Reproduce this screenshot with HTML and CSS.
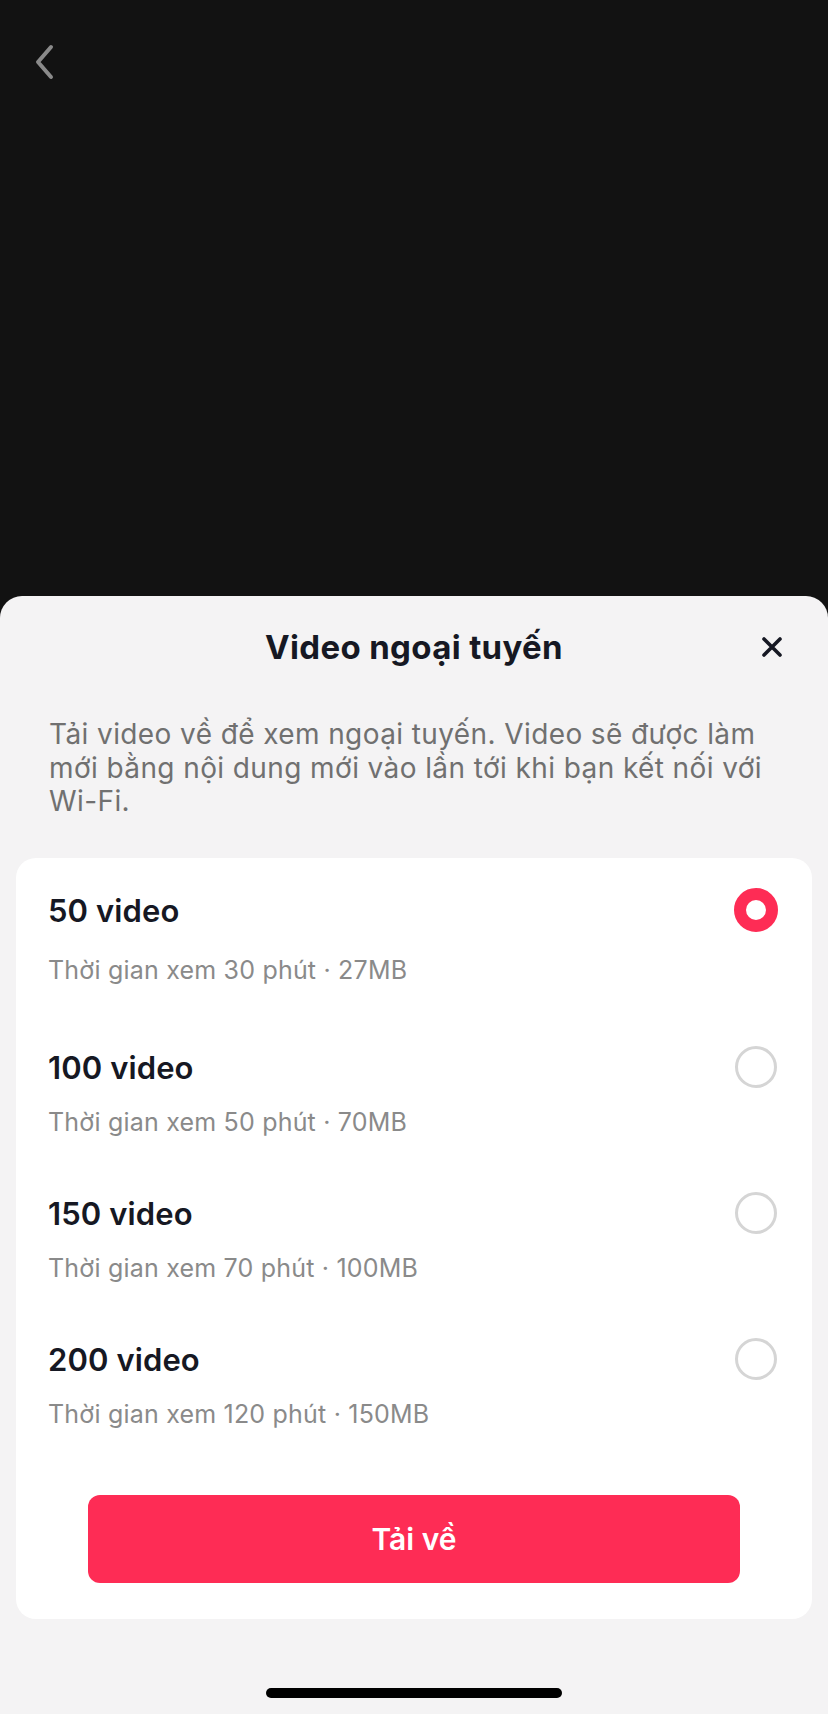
FILE: index.html
```html
<!DOCTYPE html>
<html lang="vi">
<head>
<meta charset="utf-8">
<title>Video ngoại tuyến</title>
<link rel="stylesheet" href="styles.css">
</head>
<body>
<div class="screen">
  <div class="backdrop">
    <button class="back" aria-label="Quay lại">
      <svg viewBox="0 0 24 40" width="24" height="40"><path d="M19 5 L6 20 L19 35" fill="none" stroke="#8a8a8a" stroke-width="4" stroke-linecap="round" stroke-linejoin="round"/></svg>
    </button>
  </div>
  <section class="sheet">
    <header class="sheet-header">
      <span></span>
      <h1 class="sheet-title">Video ngoại tuyến</h1>
      <button class="close" aria-label="Đóng">
        <svg viewBox="0 0 22 22" width="22" height="22"><path d="M3 3 L19 19 M19 3 L3 19" fill="none" stroke="#161823" stroke-width="3.6" stroke-linecap="round"/></svg>
      </button>
    </header>
    <p class="sheet-desc">Tải video về để xem ngoại tuyến. Video sẽ được làm mới bằng nội dung mới vào lần tới khi bạn kết nối với Wi-Fi.</p>
    <div class="card">
      <div class="option option--first">
        <div class="option-head"><span class="option-title">50 video</span><span class="radio radio--on"></span></div>
        <div class="option-sub">Thời gian xem 30 phút · 27MB</div>
      </div>
      <div class="option">
        <div class="option-head"><span class="option-title">100 video</span><span class="radio"></span></div>
        <div class="option-sub">Thời gian xem 50 phút · 70MB</div>
      </div>
      <div class="option">
        <div class="option-head"><span class="option-title">150 video</span><span class="radio"></span></div>
        <div class="option-sub">Thời gian xem 70 phút · 100MB</div>
      </div>
      <div class="option">
        <div class="option-head"><span class="option-title">200 video</span><span class="radio"></span></div>
        <div class="option-sub">Thời gian xem 120 phút · 150MB</div>
      </div>
      <button class="download">Tải về</button>
    </div>
    <div class="home-indicator"></div>
  </section>
</div>
</body>
</html>
```

FILE: styles.css
```css
* { box-sizing: border-box; }
html, body { margin: 0; padding: 0; }
body {
  width: 828px;
  height: 1714px;
  background: #121212;
  font-family: Inter, "Noto Sans", sans-serif;
  overflow: hidden;
}
.screen {
  display: flex;
  flex-direction: column;
  height: 1714px;
}
.backdrop {
  flex: 1;
  background: #121212;
  padding: 42px 0 0 32px;
}
.back {
  display: block;
  padding: 0;
  border: 0;
  background: none;
  width: 24px;
  height: 40px;
}
.back svg { display: block; }
.sheet {
  background: #f4f3f4;
  border-radius: 22px 22px 0 0;
  display: flex;
  flex-direction: column;
}
.sheet-header {
  height: 102px;
  display: grid;
  grid-template-columns: 1fr auto 1fr;
  align-items: center;
  padding: 0 45px;
}
.sheet-title {
  margin: 0;
  font-size: 33px;
  font-weight: 700;
  line-height: 40px;
  color: #161823;
  letter-spacing: 0.35px;
}
.close {
  justify-self: end;
  padding: 0;
  border: 0;
  background: none;
  width: 22px;
  height: 22px;
}
.close svg { display: block; }
.sheet-desc {
  margin: 20px 0 0;
  padding: 0 45px 0 49px;
  font-size: 28px;
  line-height: 33.5px;
  color: #707070;
  letter-spacing: 0.4px;
}
.card {
  margin: 39.5px 16px 0;
  background: #ffffff;
  border-radius: 20px;
  padding: 30px 35px 36px 32px;
  display: flex;
  flex-direction: column;
}
.option + .option { margin-top: 53px; }
.option--first { margin-bottom: 6px; }
.option-head {
  height: 44px;
  display: flex;
  align-items: center;
  justify-content: space-between;
}
.option-title {
  font-size: 31px;
  font-weight: 600;
  color: #161823;
  letter-spacing: 0.1px;
}
.option-sub {
  margin-top: 17px;
  font-size: 25px;
  line-height: 32px;
  color: #8a8a8a;
  letter-spacing: 0.2px;
}
.option--first .option-sub { margin-top: 22px; }
.radio {
  width: 42px;
  height: 42px;
  border-radius: 50%;
  border: 3px solid #d5d5d5;
  flex: none;
}
.radio--on {
  width: 44px;
  height: 44px;
  border: 12px solid #fe2c55;
  margin-right: -1px;
}
.download {
  margin: 65px 37px 0 40px;
  height: 88px;
  border: 0;
  border-radius: 12px;
  background: #fe2c55;
  color: #ffffff;
  font-family: inherit;
  font-size: 30px;
  font-weight: 600;
}
.home-indicator {
  align-self: center;
  margin: 69px 0 16px;
  width: 296px;
  height: 10px;
  border-radius: 5px;
  background: #000000;
}
```
